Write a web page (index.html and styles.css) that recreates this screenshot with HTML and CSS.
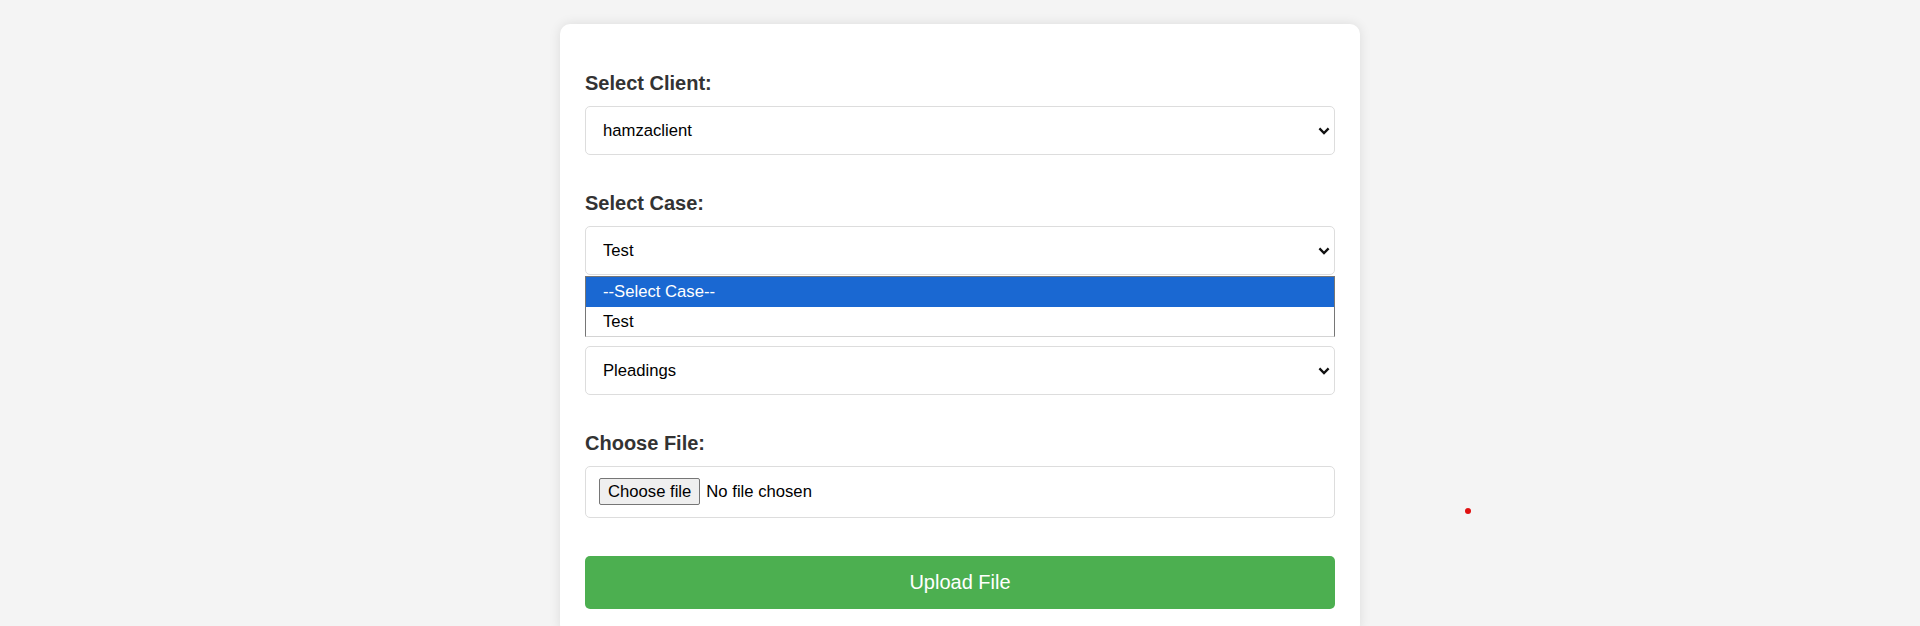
FILE: index.html
```html
<!DOCTYPE html>
<html lang="en">
<head>
<meta charset="utf-8">
<title>Upload File</title>
<link rel="stylesheet" href="styles.css">
</head>
<body>
<div class="card">
  <form class="upload-form">
    <div class="group">
      <label class="label" for="client">Select Client:</label>
      <div class="select-wrap">
        <select id="client" class="select">
          <option>hamzaclient</option>
        </select>
        <svg class="chev" width="12" height="8" viewBox="0 0 12 8"><path d="M1.4 1.4 L6 6 L10.6 1.4" fill="none" stroke="#111" stroke-width="2.3"/></svg>
      </div>
    </div>
    <div class="group">
      <label class="label" for="case">Select Case:</label>
      <div class="select-wrap">
        <select id="case" class="select">
          <option>Test</option>
        </select>
        <svg class="chev" width="12" height="8" viewBox="0 0 12 8"><path d="M1.4 1.4 L6 6 L10.6 1.4" fill="none" stroke="#111" stroke-width="2.3"/></svg>
        <div class="dropdown">
          <div class="opt opt-active">--Select Case--</div>
          <div class="opt">Test</div>
        </div>
      </div>
    </div>
    <div class="group">
      <label class="label label-covered" for="category">Select Category:</label>
      <div class="select-wrap">
        <select id="category" class="select">
          <option>Pleadings</option>
        </select>
        <svg class="chev" width="12" height="8" viewBox="0 0 12 8"><path d="M1.4 1.4 L6 6 L10.6 1.4" fill="none" stroke="#111" stroke-width="2.3"/></svg>
      </div>
    </div>
    <div class="group group-file">
      <span class="label">Choose File:</span>
      <div class="file-box">
        <label class="file-btn" for="file">Choose file</label>
        <span class="file-name">No file chosen</span>
        <input id="file" class="file-input" type="file">
      </div>
    </div>
    <button type="button" class="upload-btn">Upload File</button>
  </form>
</div>
<span class="cursor-dot"></span>
</body>
</html>
```
FILE: styles.css
```css
html, body {
  margin: 0;
  padding: 0;
}
html {
  height: 626px;
  overflow: hidden;
}
body {
  background: #f4f4f4;
  font-family: "Liberation Sans", Arial, sans-serif;
  position: relative;
  height: 626px;
  overflow: hidden;
}
.card {
  width: 750px;
  margin: 24px auto 0;
  background: #fff;
  border-radius: 10px;
  box-shadow: 0 0 12px rgba(0, 0, 0, 0.1);
  padding: 48px 25px 25px;
}
.upload-form {
  display: flex;
  flex-direction: column;
}
.group {
  display: flex;
  flex-direction: column;
  margin-bottom: 37px;
}
.group-file {
  margin-bottom: 38px;
}
.label {
  display: block;
  font-size: 20px;
  line-height: 23px;
  font-weight: bold;
  color: #333;
  margin-bottom: 11px;
}
.label-covered {
  visibility: hidden;
}
.select-wrap {
  position: relative;
}
.select {
  appearance: none;
  -webkit-appearance: none;
  display: block;
  width: 100%;
  height: 49px;
  box-sizing: border-box;
  border: 1px solid #ddd;
  border-radius: 5px;
  background: #fff;
  padding: 0 17px;
  font-family: "Liberation Sans", Arial, sans-serif;
  font-size: 16.67px;
  color: #000;
  margin: 0;
}
.chev {
  position: absolute;
  right: 5px;
  top: 21px;
  pointer-events: none;
}
.dropdown {
  position: absolute;
  left: 0;
  right: 0;
  top: 100%;
  margin-top: 1px;
  background: #fff;
  border: 1px solid #767676;
  border-bottom-color: #d4d4d4;
  z-index: 5;
}
.opt {
  height: 30px;
  line-height: 30px;
  padding-left: 17px;
  font-size: 16.67px;
  color: #000;
}
.opt + .opt {
  height: 29px;
  line-height: 29px;
}
.opt-active {
  background: #1a68d2;
  color: #fff;
}
.file-box {
  border: 1px solid #ddd;
  border-radius: 5px;
  padding: 11px 13px 12px;
  background: #fff;
  display: flex;
  align-items: center;
  gap: 6px;
}
.file-btn {
  box-sizing: border-box;
  height: 27px;
  line-height: 25px;
  padding: 0 8px;
  background: #efefef;
  border: 1px solid #767676;
  border-radius: 2px;
  font-size: 16.67px;
  color: #000;
}
.file-name {
  font-size: 16.67px;
  color: #000;
}
.file-input {
  display: none;
}
.upload-btn {
  display: block;
  width: 100%;
  height: 53px;
  border: none;
  border-radius: 5px;
  background: #4caf50;
  color: #fff;
  font-family: "Liberation Sans", Arial, sans-serif;
  font-size: 20px;
  padding: 0;
}
.cursor-dot {
  position: absolute;
  left: 1465px;
  top: 508px;
  width: 6px;
  height: 6px;
  border-radius: 50%;
  background: #e01010;
}
```
